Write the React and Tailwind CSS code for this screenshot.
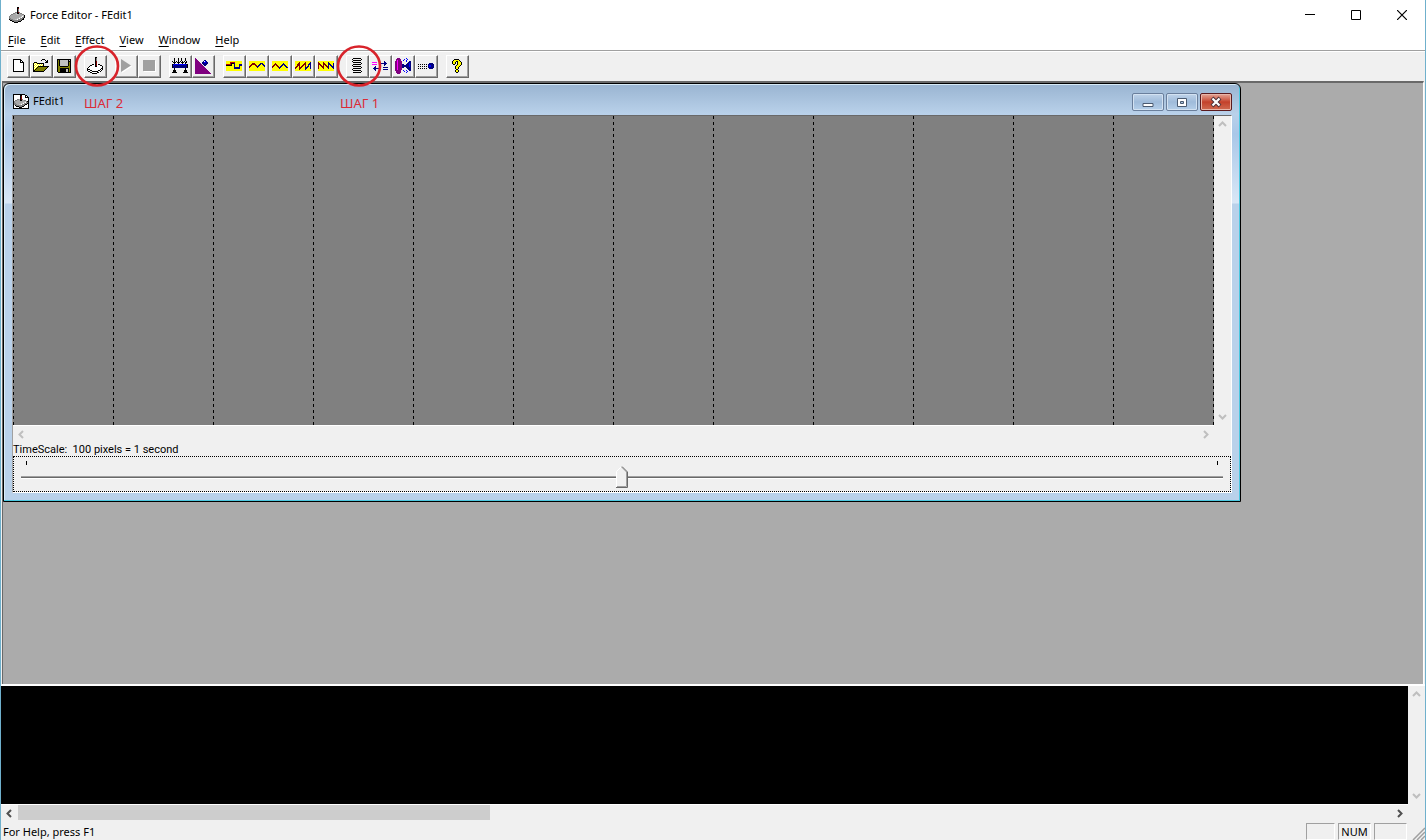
import { useState } from 'react';

const COLORS = {
  '#': '#000000',
  w: '#ffffff',
  g: '#c0c0c0',
  a: '#a8a8a8',
  d: '#808080',
  y: '#ffff00',
  o: '#808000',
  r: '#800000',
  R: '#c00000',
  n: '#000080',
  b: '#0000ff',
  p: '#800080',
  m: '#ff00ff',
};

// 16 colour toolbar bitmaps, one character per pixel
const ICONS = {
  new: [
    '########...',
    '#wwwwww##..',
    '#wwwwww#w#.',
    '#wwwwww####',
    '#wwwwwwwww#',
    '#wwwwwwwww#',
    '#wwwwwwwww#',
    '#wwwwwwwww#',
    '#wwwwwwwww#',
    '#wwwwwwwww#',
    '#wwwwwwwww#',
    '#wwwwwwwww#',
    '###########',
  ],
  open: [
    '.........###....',
    '........#...#.#.',
    '.............##.',
    '.###........###.',
    '#ywy#######.....',
    '#wywywywyw#.....',
    '#ywywywywy#.....',
    '#wywy###########',
    '#ywy#ooooooooo#.',
    '#wy#ooooooooo#..',
    '#y#ooooooooo#...',
    '##ooooooooo#....',
    '###########.....',
  ],
  save: [
    '##############',
    '#o#gggggggg#g#',
    '#o#gggggggg###',
    '#o#gggggggg#o#',
    '#o#gggggggg#o#',
    '#o#gggggggg#o#',
    '#o#gggggggg#o#',
    '#oo########oo#',
    '#oooooooooooo#',
    '#oo#########o#',
    '#oo######gg#o#',
    '#oo######gg#o#',
    '#oo######gg#o#',
    '.#############',
  ],
  download: [
    '........##......',
    '........#d......',
    '........#d......',
    '........#d......',
    '........#r......',
    '........#r......',
    '.......w#rw.....',
    '.....##w#rw##...',
    '...##www#rwww##.',
    '..#wwwww##wwwww#',
    '.#wwwwwwwwwwwww#',
    '#wwwwwwwwwwwww##',
    '###wwwwwwwwww#w#',
    '#ww##wwwwww##w#.',
    '.##ww######ww#..',
    '...##wwwww##....',
    '.....#####......',
  ],
  beam: [
    '..#...#..#...#..',
    '..#...#..#...#..',
    '..#...#..#...#..',
    '#.#.#.#.#.#.#.#.',
    '.###.###.###.##.',
    '..#...#...#..#..',
    '#nbbbbbbbbbbbbn#',
    '#bnnnnnnnnnnnnn#',
    '#nnnnnnnnnnnnnn#',
    '#nnnnnnnnnnnnnn#',
    '..#..........#..',
    '..#..........#..',
    '.###........###.',
    '.###........###.',
    '#####......#####',
  ],
  ramp: [
    'p...............',
    'pp..............',
    'ppp......nn.....',
    'pppp....nwbn....',
    'ppppp..nnbbnn...',
    'pppppp.nnnnnn...',
    'ppppppp.nnnn....',
    'pppppppp.nn.....',
    'ppppppppp.......',
    'pppppppppp......',
    'ppppppppppp.....',
    'pppppppppppp....',
    'ppppppppppppp...',
    'pppppppppppppp..',
    'ppppppppppppppp.',
    'pppppppppppppppp',
  ],
  square: [
    'yyyyyyyyyyyyyyyy',
    'yyyyRRRRRyyyyyyy',
    'yyyyR###nyyyyyyy',
    'RRRRR#yynyyyynnn',
    '######yynyyyynnn',
    'yyyyyyyynyyyynyy',
    'yyyyyyyynnnnnnyy',
    'yyyyyyyynnnnnnyy',
    'yyyyyyyyyyyyyyyy',
    'yyyyyyyyyyyyyyyy',
  ],
  sine: [
    'yyyyyyyyyyyyyyyy',
    'yyyyyyyyyyyyyyyy',
    'yyyrrryyyyynnnyy',
    'yyrrrrryyynnynny',
    'yrryyyrrynnyyynn',
    'rryyyyyrnnyyyyyn',
    'ryyyyyyynyyyyyyy',
    'yyyyyyyyyyyyyyyy',
    'yyyyyyyyyyyyyyyy',
    'yyyyyyyyyyyyyyyy',
  ],
  triangle: [
    'yyyyyyyyyyyyyyyy',
    'yyyyyyyyyyyyyyyy',
    'yyyryyyyyyynyyyy',
    'yyrrryyyyynnnyyy',
    'yrryrryyynnynnyy',
    'rryyyrrynnyyynny',
    'ryyyyyrnnyyyyynn',
    'yyyyyyynyyyyyyyy',
    'yyyyyyyyyyyyyyyy',
    'yyyyyyyyyyyyyyyy',
  ],
  sawUp: [
    'yyyyyyyyyyyyyyyy',
    'yyyyryyyyyryyyyn',
    'yyyrryyyyrryyynn',
    'yyrrryyyrrryynnn',
    'yyrrryyrryryynyn',
    'yrryryrryyrynnyn',
    'rryyrrryyynnnyyn',
    'ryyyrryyyynnyyyn',
    'yyyyryyyyynyyyyy',
    'yyyyyyyyyyyyyyyy',
  ],
  sawDown: [
    'yyyyyyyyyyyyyyyy',
    'ryyyyryyyynyyyyy',
    'rryyyrryyynnyyyn',
    'rrryyrrryynnnyyn',
    'ryrryryrrynynnyn',
    'ryyrrryyrrnyynnn',
    'ryyyrryyyrnyyynn',
    'ryyyyryyyynyyyyn',
    'yyyyyyyyyyyyyyyy',
    'yyyyyyyyyyyyyyyy',
  ],
  spring: [
    '.########.',
    '#........#',
    '.########.',
    '#.........',
    '.########.',
    '.........#',
    '.########.',
    '#.........',
    '.########.',
    '.........#',
    '.########.',
    '#.........',
    '.########.',
    '.........#',
    '.########.',
  ],
  damper: [
    '............n...',
    'mmmmm.......nn..',
    '.......nnnnnnnn.',
    'mmmmm..nn...nn..',
    '.......rr...n...',
    '...n...rr.......',
    '..nn...nn..nnnnn',
    '.nnnnnnnn.......',
    '..nn.......nnnnn',
    '...n............',
  ],
  inertia: [
    '..ppp......b....',
    '.ppppp...b..b...',
    '.pmppp..b..b....',
    'ppmpppp....b..nn',
    'ppmpppp......nnn',
    'ppmpppp.....nnbn',
    'ppmppppnn..nnnbn',
    'ppmppppnnnnnnnbn',
    'ppmppppnnnnnnnbn',
    'ppmppppnn..nnnnn',
    'ppmpppp.....nnnn',
    'ppmpppp......nnn',
    'pppppp..b..b..nn',
    '.ppppp...b..b...',
    '.ppppp.....b....',
    '..ppp...........',
  ],
  friction: [
    '...........nnnn.',
    '#.#.#.#.#.nnnnnn',
    '..........nbbnnn',
    '#.#.#.#.#.nbbnnn',
    '..........nnnnnn',
    '#.#.#.#.#..nnnn.',
  ],
  help: [
    '..#####...',
    '.#yyyyy#..',
    '#yyy##yy#.',
    '#yy#.#yyy#',
    '#yy#.#yyy#',
    '.##..#yyy#',
    '....#yyy#.',
    '...#yyy#..',
    '...#yy#...',
    '...#yy#...',
    '....##....',
    '...#yy#...',
    '...#yy#...',
    '....##....',
  ],
  joystick: [
    '........##......',
    '........#r......',
    '........#d......',
    '........#d......',
    '........#d......',
    '......dd#rd.....',
    '....ddag##add...',
    '..ddaaaggaaaadd.',
    '.daaaaaaaaaaagg#',
    'daaaaaaaaaaagwg#',
    'daaaaaaaaaggwdd#',
    'ddaaaaaaggwddd#.',
    '#dddaaggwdddd##.',
    '.##ddddddddd#...',
    '...##dddd###....',
    '.....####.......',
  ],
  doc: [
    '############....',
    '#wwwwww##www##..',
    '#wwwwww#rwww#w#.',
    '#wwwwww#rwww####',
    '#wwwwww#rwwwwww#',
    '#wwwdda#rdwwwww#',
    '#wddaaa##aaddww#',
    '#daaaaaaaaaagd##',
    '#daaaaaaaaggwdd#',
    '#ddaaaaaggwddd##',
    '#dddaaggwddd##w#',
    '#w#dddddddd#www#',
    '#ww###ddd##wwww#',
    '#wwwww###wwwwww#',
    '################',
  ],
};

const TOOL_GROUPS = [
  [['New', 'new'], ['Open', 'open'], ['Save', 'save']],
  [['Download', 'download']],
  [['Play', 'play'], ['Stop', 'stop']],
  [['Constant force', 'beam'], ['Ramp force', 'ramp']],
  [['Square', 'square'], ['Sine', 'sine'], ['Triangle', 'triangle'], ['Sawtooth up', 'sawUp'], ['Sawtooth down', 'sawDown']],
  [['Spring', 'spring'], ['Damper', 'damper'], ['Inertia', 'inertia'], ['Friction', 'friction']],
  [['Help', 'help']],
];

const STEPS = {
  download: { label: 'ШАГ 2', place: 'left-0' },
  spring: { label: 'ШАГ 1', place: '-left-1.5' },
};

const MENUS = ['File', 'Edit', 'Effect', 'View', 'Window', 'Help'];

function PixelIcon({ name }) {
  const rows = ICONS[name];
  const width = rows[0].length;
  return (
    <svg width={width} height={rows.length} shapeRendering="crispEdges" aria-hidden="true" className="shrink-0">
      {rows.map((row, y) =>
        [...row].map((c, x) =>
          COLORS[c] ? <rect key={`${x}-${y}`} x={x} y={y} width="1" height="1" fill={COLORS[c]} /> : null
        )
      )}
    </svg>
  );
}

function ToolIcon({ name }) {
  if (name === 'play') {
    return (
      <svg width="12" height="15" aria-hidden="true">
        <path d="M2 2L12 8.500L2 15Z" fill="#fff" />
        <path d="M1 1L11 7.500L1 14Z" fill="#a0a0a0" />
      </svg>
    );
  }
  if (name === 'stop') {
    return (
      <svg width="13" height="12" aria-hidden="true">
        <path d="M1 1H13V12H1Z" fill="#fff" />
        <path d="M0 0H12V11H0Z" fill="#a0a0a0" />
      </svg>
    );
  }
  return <PixelIcon name={name} />;
}

function StepMark({ label, place }) {
  return (
    <>
      <svg width="46" height="42" className="absolute -top-2.5 -left-2.5 z-20 pointer-events-none" aria-hidden="true">
        <ellipse cx="23" cy="21" rx="21" ry="19.500" fill="none" stroke="#d8232b" strokeWidth="2.600" />
      </svg>
      <span className={`absolute top-10 z-20 text-[13px] leading-4 whitespace-nowrap text-[#dc2a36] pointer-events-none ${place}`}>
        {label}
      </span>
    </>
  );
}

function ToolButton({ title, name }) {
  return (
    <div className="relative">
      <button
        type="button"
        title={title}
        aria-label={title}
        className="flex h-[23px] w-[23px] items-center justify-center border border-t-white border-l-white border-r-[#696969] border-b-[#696969] bg-[#f0f0f0] pr-px pb-0.5 shadow-[inset_-1px_-1px_0_#a0a0a0]"
      >
        <ToolIcon name={name} />
      </button>
      {STEPS[name] && <StepMark {...STEPS[name]} />}
    </div>
  );
}

const ARROWS = {
  up: 'M1 6L4.500 2.500L8 6',
  down: 'M1 3L4.500 6.500L8 3',
  left: 'M6 1L2.500 4.500L6 8',
  right: 'M3 1L6.500 4.500L3 8',
};

function ScrollArrow({ dir, active }) {
  return (
    <button type="button" aria-label={`Scroll ${dir}`} className="flex h-[17px] w-[17px] items-center justify-center">
      <svg width="9" height="9" aria-hidden="true">
        <path d={ARROWS[dir]} fill="none" stroke={active ? '#505050' : '#bfbfbf'} strokeWidth="2" />
      </svg>
    </button>
  );
}

function TitleBar() {
  return (
    <header className="flex h-[30px] items-center bg-white pl-2">
      <PixelIcon name="joystick" />
      <h1 className="ml-[5px] flex-1">Force Editor - FEdit1</h1>
      <button type="button" aria-label="Minimize" className="flex h-full w-[46px] items-center justify-center">
        <svg width="10" height="10" aria-hidden="true"><path d="M0 4.500H10" stroke="#000" /></svg>
      </button>
      <button type="button" aria-label="Maximize" className="flex h-full w-[46px] items-center justify-center">
        <svg width="10" height="10" aria-hidden="true"><path d="M.5 .5H9.500V9.500H.5Z" fill="none" stroke="#000" /></svg>
      </button>
      <button type="button" aria-label="Close" className="flex h-full w-[46px] items-center justify-center">
        <svg width="10" height="10" aria-hidden="true"><path d="M0 0L10 10M10 0L0 10" stroke="#000" strokeWidth="1.200" /></svg>
      </button>
    </header>
  );
}

function MenuBar() {
  return (
    <nav className="flex h-5 items-center gap-[15px] bg-white pl-[7px]">
      {MENUS.map((m) => (
        <button key={m} type="button">
          <span className="underline underline-offset-2">{m[0]}</span>
          {m.slice(1)}
        </button>
      ))}
    </nav>
  );
}

function Toolbar() {
  return (
    <div className="flex gap-2 border-t border-[#a0a0a0] bg-[#f0f0f0] pt-1 pb-[3px] pl-1.5 shadow-[inset_0_1px_0_#fff]">
      {TOOL_GROUPS.map((group, i) => (
        <div key={i} className="flex">
          {group.map(([title, name]) => (
            <ToolButton key={name} title={title} name={name} />
          ))}
        </div>
      ))}
    </div>
  );
}

function CaptionButton({ label, close, children }) {
  const look = close
    ? 'border-[#5a1a1e] bg-linear-to-b from-[#e3a598] from-0% via-[#c4402a] via-50% to-[#cf6a50] shadow-[inset_0_0_0_1px_#e9b5a8]'
    : 'border-[#6a7f9c] bg-linear-to-b from-[#bfd3e9] from-0% via-[#9fbbda] via-50% to-[#b5cfea] shadow-[inset_0_0_0_1px_#d3e2f2]';
  return (
    <button
      type="button"
      aria-label={label}
      className={`flex h-[18px] w-8 items-center justify-center rounded-xs border ${look}`}
    >
      <svg width="14" height="12" aria-hidden="true">{children}</svg>
    </button>
  );
}

function Timeline() {
  const seconds = Array.from({ length: 13 }, (_, i) => i);
  return (
    <div className="flex">
      <svg height="309" shapeRendering="crispEdges" className="min-w-0 flex-1 bg-[#808080]" role="img" aria-label="Effect timeline">
        {seconds.map((s) => (
          <path key={s} d={`M${s * 100 + 0.5} 0V309`} stroke="#000" strokeDasharray="3 3" />
        ))}
      </svg>
      <div className="flex w-[17px] flex-col justify-between bg-[#f0f0f0]">
        <ScrollArrow dir="up" />
        <ScrollArrow dir="down" />
      </div>
    </div>
  );
}

function TimeScale() {
  const [value, setValue] = useState(50);
  return (
    <div>
      <label htmlFor="scale" className="block h-[13px] font-['Roboto'] text-[11px] leading-[13px] whitespace-pre">
        {'TimeScale:  100 pixels = 1 second'}
      </label>
      <div className="relative h-9 border border-dotted border-black px-[7px] pt-1">
        <div className="flex justify-between px-[5px]">
          <span className="h-1 w-px bg-black" />
          <span className="h-1 w-px bg-black" />
        </div>
        <div className="relative mt-[11px] h-[3px] border-t border-b border-t-[#a0a0a0] border-b-white bg-[#696969]">
          <svg
            width="12"
            height="22"
            className="absolute -top-[11px] -translate-x-1/2"
            style={{ left: `${value}%` }}
            aria-hidden="true"
          >
            <path d="M.5 21V5.500L5.500 .5L11.500 6V21.500H.5Z" fill="#f0f0f0" />
            <path d="M.5 21V5.500L5.500 .5" fill="none" stroke="#fff" />
            <path d="M5.500 1L10.500 6V20.500H1" fill="none" stroke="#a0a0a0" />
            <path d="M6 .5L11.500 6V21.500H0" fill="none" stroke="#696969" />
          </svg>
        </div>
        <input
          id="scale"
          type="range"
          min="0"
          max="100"
          value={value}
          onChange={(e) => setValue(Number(e.target.value))}
          className="absolute inset-0 h-full w-full opacity-0"
        />
      </div>
    </div>
  );
}

function EffectWindow() {
  return (
    <section className="mr-[182px] rounded-t-md border border-black bg-[linear-gradient(#99b4d1_0,#b9d1ea_30px,#a9c7e8_50px,#d9e7f6_119px,#b9d1ea_120px)] px-2 pb-2 shadow-[inset_-1px_-1px_0_#4cc8e0,inset_1px_1px_0_#d8ecf8]">
      <div className="flex h-[31px] items-center pt-1 pl-px">
        <PixelIcon name="doc" />
        <h2 className="ml-1 flex-1">FEdit1</h2>
        <div className="flex gap-0.5">
          <CaptionButton label="Minimize">
            <path d="M2 7.500H12V10.500H2Z" fill="#fff" stroke="#4a5a70" />
          </CaptionButton>
          <CaptionButton label="Maximize">
            <path d="M2.500 2.500H11.500V10.500H2.500Z" fill="#fff" stroke="#4a5a70" />
            <path d="M5.500 5.500H8.500V7.500H5.500Z" fill="#a9c2de" stroke="#4a5a70" />
          </CaptionButton>
          <CaptionButton label="Close" close>
            <path d="M3 2L11 10M11 2L3 10" stroke="#4a3038" strokeWidth="4" />
            <path d="M3.500 2.500L10.500 9.500M10.500 2.500L3.500 9.500" stroke="#fff" strokeWidth="2.200" />
          </CaptionButton>
        </div>
      </div>
      <div className="border border-t-[#696969] border-l-[#a0a0a0] border-r-white border-b-white bg-[#f0f0f0]">
        <Timeline />
        <div className="mr-[17px] flex justify-between border-t border-white">
          <ScrollArrow dir="left" />
          <ScrollArrow dir="right" />
        </div>
        <TimeScale />
      </div>
    </section>
  );
}

function OutputPane() {
  return (
    <div className="bg-[#f0f0f0]">
      <div className="flex border-t-2 border-white">
        <textarea readOnly aria-label="Output" className="block h-[118px] min-w-0 flex-1 resize-none bg-black text-white" />
        <div className="flex w-[17px] flex-col justify-between">
          <ScrollArrow dir="up" />
          <ScrollArrow dir="down" />
        </div>
      </div>
      <div className="mr-[17px] flex border-t border-white">
        <ScrollArrow dir="left" active />
        <div className="flex flex-1">
          <div className="h-[15px] w-[472px] bg-[#cdcdcd]" />
        </div>
        <ScrollArrow dir="right" active />
      </div>
    </div>
  );
}

function StatusBar() {
  return (
    <footer className="flex h-[18px] items-stretch gap-[3px] bg-[#f0f0f0] pt-px pl-0.5">
      <p className="flex-1 leading-[17px]">For Help, press F1</p>
      <span className="w-[29px] border border-t-[#a0a0a0] border-l-[#a0a0a0] border-r-white border-b-white" />
      <span className="w-[33px] border border-t-[#a0a0a0] border-l-[#a0a0a0] border-r-white border-b-white text-center leading-4">NUM</span>
      <span className="w-[33px] border border-t-[#a0a0a0] border-l-[#a0a0a0] border-r-white border-b-white" />
      <svg width="15" height="17" aria-hidden="true">
        <path d="M3 17L15 5M7 17L15 9M11 17L15 13" stroke="#a0a0a0" strokeWidth="1.500" />
      </svg>
    </footer>
  );
}

export default function App() {
  return (
    <div className="flex min-h-screen flex-col border-x border-[#6fb0cc] bg-[#f0f0f0] font-['Noto_Sans',sans-serif] text-[11px] text-black">
      <TitleBar />
      <MenuBar />
      <Toolbar />
      <main className="mx-px flex-1 border-t-2 border-r border-l border-[#696969] border-r-white bg-[#ababab]">
        <EffectWindow />
      </main>
      <OutputPane />
      <StatusBar />
    </div>
  );
}
